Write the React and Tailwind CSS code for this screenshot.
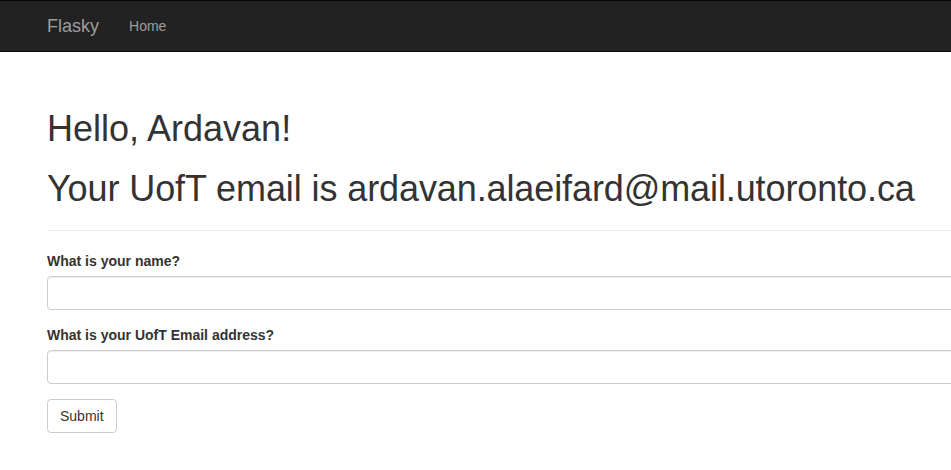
export default function App() {
  return (
    <div className="w-full h-[470px] overflow-hidden bg-white text-[#333] text-[14px] leading-[20px] font-['Liberation_Sans',Arial,sans-serif]">
      <nav className="h-[52px] bg-[#222] border-y border-[#080808]">
        <div className="flex items-center h-[50px] pl-[32px]">
          <a className="px-[15px] text-[18px] leading-[20px] text-[#9d9d9d]">Flasky</a>
          <a className="px-[15px] text-[14px] leading-[20px] text-[#9d9d9d]">Home</a>
        </div>
      </nav>

      <div className="w-[1170px] pl-[47px] pr-[15px]">
        <div className="mt-[57px] pb-[21px] border-b border-[#eee]">
          <h1 className="text-[36px] leading-[40px] font-normal">Hello, Ardavan!</h1>
          <h1 className="mt-[20px] text-[36px] leading-[40px] font-normal tracking-[-0.1px]">Your UofT email is ardavan.alaeifard@mail.utoronto.ca</h1>
        </div>

        <form className="mt-[20px]">
          <div className="mb-[15px]">
            <label className="inline-block mb-[5px] font-bold">What is your name?</label>
            <input
              type="text"
              className="block w-full h-[34px] px-[12px] py-[6px] bg-white border border-[#ccc] rounded-[4px] shadow-[inset_0_1px_1px_rgba(0,0,0,0.075)] outline-none"
            />
          </div>
          <div className="mb-[15px]">
            <label className="inline-block mb-[5px] font-bold">What is your UofT Email address?</label>
            <input
              type="text"
              className="block w-full h-[34px] px-[12px] py-[6px] bg-white border border-[#ccc] rounded-[4px] shadow-[inset_0_1px_1px_rgba(0,0,0,0.075)] outline-none"
            />
          </div>
          <button
            type="button"
            className="h-[34px] px-[12px] bg-white border border-[#ccc] rounded-[4px] text-[14px] leading-[20px] text-[#333]"
          >
            Submit
          </button>
        </form>
      </div>
    </div>
  );
}
